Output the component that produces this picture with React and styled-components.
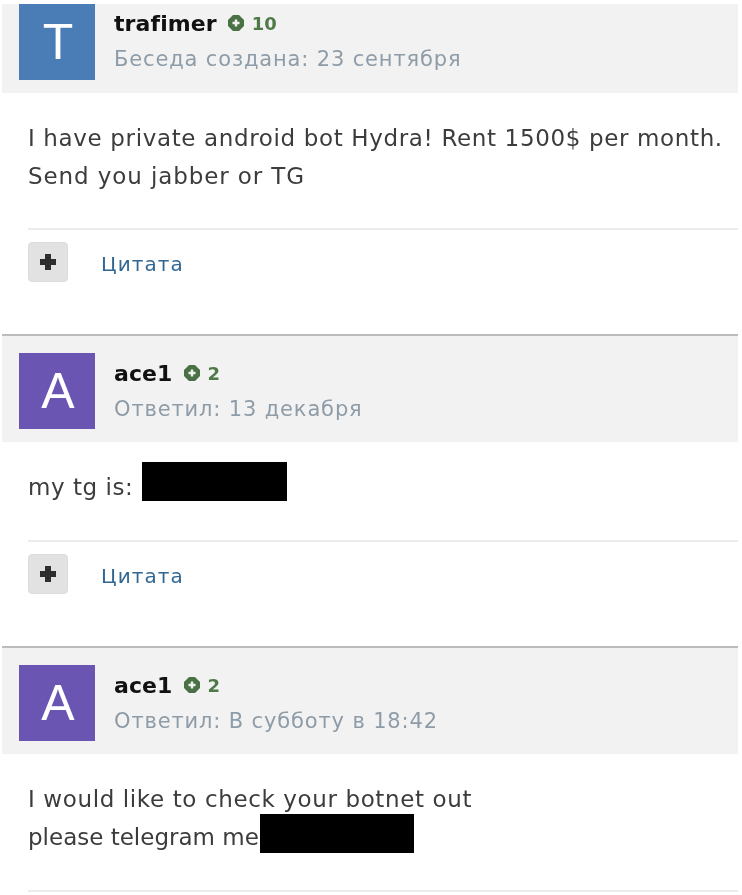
import React from 'react';
import styled, { createGlobalStyle } from 'styled-components';

const GlobalStyle = createGlobalStyle`
  html, body {
    margin: 0;
    padding: 0;
    background: #fff;
  }
  body {
    font-family: "DejaVu Sans", "Noto Sans CJK SC", sans-serif;
    overflow: hidden;
  }
`;

const Page = styled.div`
  width: 742px;
  height: 895px;
  overflow: hidden;
  padding: 4px 4px 0 2px;
  box-sizing: border-box;
  filter: blur(0.35px);
`;

const Post = styled.article`
  border-top: ${p => (p.$first ? 'none' : '2px solid #bcbcbc')};
`;

const Header = styled.header`
  display: flex;
  gap: 19px;
  height: ${p => (p.$first ? '89px' : '106px')};
  padding: ${p => (p.$first ? '0' : '17px')} 0 0 17px;
  box-sizing: border-box;
  background: #f2f2f2;
`;

const Avatar = styled.div`
  width: 76px;
  height: 76px;
  flex: none;
  display: flex;
  align-items: center;
  justify-content: center;
  padding-left: 2px;
  box-sizing: border-box;
  color: #fff;
  font-family: "Liberation Sans", sans-serif;
  font-size: 50px;
  background: ${p => p.$color};
`;

const Meta = styled.div`
  display: flex;
  flex-direction: column;
  gap: 10px;
  padding-top: ${p => (p.$first ? '6px' : '7px')};
`;

const Author = styled.div`
  display: flex;
  align-items: center;
  gap: 10px;
  height: 26px;
`;

const Name = styled.span`
  font-size: 22px;
  font-weight: 700;
  letter-spacing: 0.1px;
  color: #111;
`;

const Reputation = styled.span`
  display: flex;
  align-items: center;
  gap: 7px;
  font-size: 18px;
  font-weight: 700;
  color: #4f7a48;
`;

const Stamp = styled.div`
  font-size: 21px;
  letter-spacing: 0.85px;
  line-height: 26px;
  color: #8e9ca8;
  white-space: pre;
`;

const Body = styled.div`
  padding: 26px 0 0 26px;
  height: ${p => p.$height};
  box-sizing: border-box;
  font-size: 23px;
  line-height: 38px;
  color: #3c3c3c;
  white-space: nowrap;
`;

const Line = styled.div`
  letter-spacing: ${p => p.$track}px;
`;

const Redacted = styled.span`
  display: inline-block;
  vertical-align: top;
  height: 39px;
  width: ${p => p.$width}px;
  margin-left: ${p => p.$gap}px;
  margin-top: -${p => p.$lift}px;
  background: #000;
`;

const Actions = styled.div`
  margin-left: 26px;
  height: 106px;
  box-sizing: border-box;
  border-top: 2px solid #ececec;
  padding-top: 12px;
  display: flex;
  align-items: flex-start;
  gap: 33px;
`;

const PlusButton = styled.button`
  width: 40px;
  height: 40px;
  padding: 0;
  display: flex;
  align-items: center;
  justify-content: center;
  background: #e2e2e2;
  border: 1px solid #dcdcdc;
  border-radius: 4px;
`;

const QuoteLink = styled.a`
  font-size: 20px;
  letter-spacing: 1.1px;
  line-height: 44px;
  color: #336791;
  text-decoration: none;
`;

const PlusIcon = () => (
  <svg width="16" height="16" viewBox="0 0 16 16">
    <path d="M5 0h6v5h5v6h-5v5H5v-5H0V5h5z" fill="#2e2e2e" />
  </svg>
);

const RepIcon = () => (
  <svg width="18" height="18" viewBox="0 0 18 18">
    <path
      d="M6 1h6l5 5v6l-5 5H6l-5-5V6zM7.800 5.500v2.300H5.500v2.400h2.300v2.300h2.400v-2.300h2.300V7.800h-2.300V5.500z"
      fill="#4a7045"
      fillRule="evenodd"
    />
  </svg>
);

const posts = [
  {
    id: 1,
    first: true,
    letter: 'T',
    color: '#4a7db5',
    name: 'trafimer',
    rep: 10,
    stamp: 'Беседа создана: 23 сентября',
    bodyHeight: '135px',
    body: (
      <>
        <Line $track={0.64}>I have private android bot Hydra! Rent 1500$ per month.</Line>
        <Line $track={0.9}>Send you jabber or TG</Line>
      </>
    ),
  },
  {
    id: 2,
    letter: 'A',
    color: '#6a55b3',
    name: 'ace1',
    rep: 2,
    stamp: 'Ответил: 13 декабря',
    bodyHeight: '98px',
    body: (
      <Line $track={0.55}>
        my tg is:
        <Redacted $width={145} $gap={9} $lift={6} />
      </Line>
    ),
  },
  {
    id: 3,
    letter: 'A',
    color: '#6a55b3',
    name: 'ace1',
    rep: 2,
    stamp: 'Ответил: В субботу в 18:42',
    bodyHeight: '136px',
    last: true,
    body: (
      <>
        <Line $track={0.62}>I would like to check your botnet out</Line>
        <Line $track={0}>
          please telegram me
          <Redacted $width={154} $gap={1} $lift={4} />
        </Line>
      </>
    ),
  },
];

const App = () => (
  <Page>
    <GlobalStyle />
    {posts.map(post => (
      <Post key={post.id} $first={post.first}>
        <Header $first={post.first}>
          <Avatar $color={post.color}>{post.letter}</Avatar>
          <Meta $first={post.first}>
            <Author>
              <Name>{post.name}</Name>
              <Reputation>
                <RepIcon />
                {post.rep}
              </Reputation>
            </Author>
            <Stamp>{post.stamp}</Stamp>
          </Meta>
        </Header>
        <Body $height={post.bodyHeight}>{post.body}</Body>
        <Actions>
          {!post.last && (
            <>
              <PlusButton aria-label="Плюс">
                <PlusIcon />
              </PlusButton>
              <QuoteLink href="#">Цитата</QuoteLink>
            </>
          )}
        </Actions>
      </Post>
    ))}
  </Page>
);

export default App;
